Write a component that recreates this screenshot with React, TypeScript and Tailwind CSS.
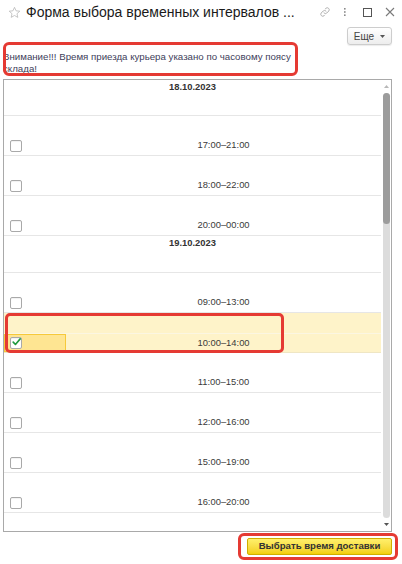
import React from "react";

const font = { fontFamily: '"Liberation Sans", Arial, sans-serif' };

function Checkbox({ checked }: { checked?: boolean }) {
  return (
    <div className="w-[12px] h-[12px] rounded-[2px] border border-[#a9a9a9] bg-white flex items-center justify-center shadow-[inset_0_1px_1px_rgba(0,0,0,0.06)]">
      {checked && (
        <svg width="11" height="10" viewBox="0 0 11 10" className="-mt-[2px] ml-[1px]">
          <path d="M1.5 5.2 L4.2 8 L10 1.2" stroke="#1f9a3f" strokeWidth="2" fill="none" strokeLinecap="round" strokeLinejoin="round" />
        </svg>
      )}
    </div>
  );
}

function DateRow({ date, h }: { date: string; h: string }) {
  return (
    <div className={`${h} border-b border-[#e6e6e6] flex justify-center pt-[1px]`}>
      <span className="text-[9.4px] leading-[12px] font-bold text-[#333]">{date}</span>
    </div>
  );
}

function ItemRow({ time, selected }: { time: string; selected?: boolean }) {
  if (selected) {
    return (
      <div className="relative h-[40px] border-b border-[#efe6c4] flex flex-col bg-[#fef3c9]">
        <div className="h-[20px]" />
        <div className="h-[19px] flex border-t border-[#fbf6e2]">
          <div className="w-[62px] h-full bg-[#fee592] border border-[#f6c93a] flex items-center pl-[5px]">
            <Checkbox checked />
          </div>
          <div className="flex-1 flex items-center justify-center">
            <span className="text-[9.4px] text-[#3a3a3a]">{time}</span>
          </div>
        </div>
        <div className="absolute left-[1px] top-0 w-[279px] h-[40px] border-[3px] border-[#e53a33] rounded-[5px]" />
      </div>
    );
  }
  return (
    <div className="h-[40px] border-b border-[#e6e6e6] flex flex-col">
      <div className="h-[20px]" />
      <div className="h-[19px] flex">
        <div className="w-[62px] h-full flex items-center pl-[6px]">
          <Checkbox />
        </div>
        <div className="flex-1 flex items-center justify-center">
          <span className="text-[9.4px] text-[#3a3a3a]">{time}</span>
        </div>
      </div>
    </div>
  );
}

export default function App() {
  return (
    <div className="w-[402px] h-[564px] bg-white relative overflow-hidden" style={font}>
      {/* Title bar */}
      <div className="h-[24px] flex items-center">
        <svg width="13" height="13" viewBox="0 0 24 24" className="ml-[8px]">
          <path
            d="M12 2.5 L14.9 8.9 L21.8 9.6 L16.6 14.2 L18.1 21 L12 17.5 L5.9 21 L7.4 14.2 L2.2 9.6 L9.1 8.9 Z"
            fill="none"
            stroke="#b5b5b5"
            strokeWidth="1.4"
            strokeLinejoin="round"
          />
        </svg>
        <span className="ml-[5px] text-[14px] text-[#1a1a1a] whitespace-nowrap">Форма выбора временных интервалов ...</span>
        <div className="flex-1" />
        <svg width="12" height="12" viewBox="0 0 24 24" className="mr-[12px]">
          <path d="M10 14 a4 4 0 0 0 5.6 0 l4-4 a4 4 0 0 0 -5.6 -5.6 l-1.2 1.2" fill="none" stroke="#a8a8a8" strokeWidth="1.8" strokeLinecap="round" />
          <path d="M14 10 a4 4 0 0 0 -5.6 0 l-4 4 a4 4 0 0 0 5.6 5.6 l1.2 -1.2" fill="none" stroke="#a8a8a8" strokeWidth="1.8" strokeLinecap="round" />
        </svg>
        <svg width="4" height="12" viewBox="0 0 4 12" className="mr-[16px]">
          <rect x="1" y="2" width="1.6" height="1.6" fill="#8a8a8a" />
          <rect x="1" y="5.2" width="1.6" height="1.6" fill="#8a8a8a" />
          <rect x="1" y="8.4" width="1.6" height="1.6" fill="#8a8a8a" />
        </svg>
        <div className="w-[9px] h-[9px] border border-[#555] mr-[13px]" />
        <svg width="10" height="10" viewBox="0 0 10 10" className="mr-[7px]">
          <path d="M1 1 L9 9 M9 1 L1 9" stroke="#7a7a7a" strokeWidth="1.1" />
        </svg>
      </div>

      {/* Button row */}
      <div className="h-[22px] flex justify-end pr-[10px] pt-[3px]">
        <div className="w-[45px] h-[18px] rounded-[3px] border border-[#cdcdcd] bg-gradient-to-b from-white to-[#ededed] shadow-[0_1px_1px_rgba(0,0,0,0.08)] flex items-center justify-center gap-[6px]">
          <span className="text-[10px] text-[#444]">Еще</span>
          <svg width="5" height="3" viewBox="0 0 5 3">
            <path d="M0 0 L5 0 L2.5 3 Z" fill="#555" />
          </svg>
        </div>
      </div>

      {/* Warning */}
      <div className="relative mt-[5px] pl-[3px]">
        <div className="text-[9.7px] leading-[12px] text-[#40405a] w-[294px]">
          Внимание!!! Время приезда курьера указано по часовому поясу склада!
        </div>
        <div className="absolute left-[3px] top-[-9px] w-[295px] h-[34px] border-[3px] border-[#e53a33] rounded-[6px]" />
      </div>

      {/* Table */}
      <div className="ml-[3px] mt-[4px] w-[389px] h-[453px] border border-[#a9a9a9] flex">
        <div className="flex-1 overflow-hidden">
          <DateRow date="18.10.2023" h="h-[36px]" />
          <ItemRow time="17:00–21:00" />
          <ItemRow time="18:00–22:00" />
          <ItemRow time="20:00–00:00" />
          <DateRow date="19.10.2023" h="h-[37px]" />
          <ItemRow time="09:00–13:00" />
          <ItemRow time="10:00–14:00" selected />
          <ItemRow time="11:00–15:00" />
          <ItemRow time="12:00–16:00" />
          <ItemRow time="15:00–19:00" />
          <ItemRow time="16:00–20:00" />
        </div>
        <div className="w-[10px] flex flex-col items-center pt-[5px] pb-[5px]">
          <svg width="5" height="3" viewBox="0 0 5 3">
            <path d="M0 3 L5 3 L2.5 0 Z" fill="#b8b8b8" />
          </svg>
          <div className="mt-[5px] flex-1 w-[7px] rounded-[4px] bg-[#dcdcdc] flex flex-col">
            <div className="h-[131px] w-[7px] rounded-[4px] bg-[#9c9c9c]" />
          </div>
          <svg width="5" height="3" viewBox="0 0 5 3" className="mt-[5px]">
            <path d="M0 0 L5 0 L2.5 3 Z" fill="#555" />
          </svg>
        </div>
      </div>

      {/* Bottom button */}
      <div className="w-[392px] flex justify-end mt-[6px]">
        <div className="relative">
          <div className="w-[145px] h-[17px] rounded-[2px] border border-[#cfae00] bg-gradient-to-b from-[#fff06a] to-[#f3cf00] flex items-center justify-center">
            <span className="text-[9.6px] font-bold text-[#333]">Выбрать время доставки</span>
          </div>
          <div className="absolute left-[-9px] top-[-5px] w-[160px] h-[27px] border-[3px] border-[#e53a33] rounded-[6px]" />
        </div>
      </div>
    </div>
  );
}
